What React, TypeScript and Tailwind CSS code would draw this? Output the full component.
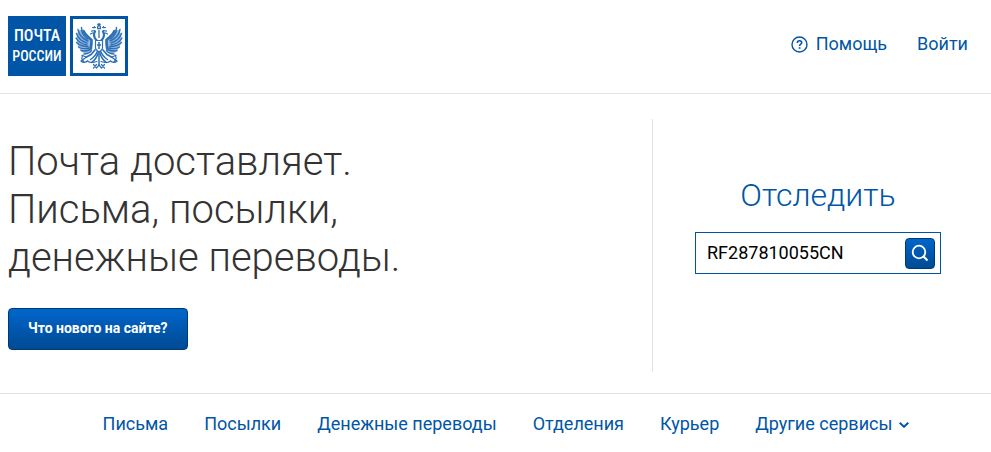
import React, { useState } from 'react';

const LINKS = ['Письма', 'Посылки', 'Денежные переводы', 'Отделения', 'Курьер'];

const EagleHalf: React.FC = () => (
  <g fill="none" stroke="currentColor" strokeLinecap="round">
    {/* wing mass under the feathers */}
    <path
      stroke="none"
      fill="currentColor"
      fillOpacity="0.5"
      d="M9 10C10 15 15 16 19.500 20.500V30L13 35L9 33L6 29L4 24L3.500 18L5 12Z"
    />
    {/* wing feathers */}
    <g strokeWidth="1.400">
      <path d="M8.500 8.500C8.500 14 11 18 15 20" />
      <path d="M5 10.500C6 16 10 20 15 22" />
      <path d="M3.500 14.500C5 19 9 22.500 14 24" />
      <path d="M3 19C5 22.500 9 25 14 26" />
      <path d="M3.500 23.500C6.500 26.500 10 27.500 15 27.500" />
      <path d="M5.500 28C8.500 30 12 30 16 29" />
      <path d="M8 31.500C11.500 32.500 14 32 17 30.500" />
      <path d="M11 35C14.500 35 16.500 34 18.500 31.500" />
    </g>
    <path strokeWidth="2.600" d="M10.500 12C12 16.500 16 18 18.500 21C18.500 25 18 28 17.500 30" />
    {/* neck, head and beak */}
    <path strokeWidth="2.200" d="M23.500 21C20.500 18.500 20.500 14.500 22 12.500" />
    <path strokeWidth="1.200" d="M21.500 11.500L18.500 12.200M19.500 14L17.500 15M21 9L21.500 7.500M19.500 8.500H22.500" />
    {/* leg and claw */}
    <path strokeWidth="1.700" d="M22 31L18 35.500L13.500 38" />
    <path strokeWidth="1.300" d="M13.500 38L9 36.500M13.500 38L8 42M8 42C10 44 13 43.500 14.500 42" />
    <path strokeWidth="1.200" d="M10 36C8 38.500 8.500 40.500 11 43" />
    {/* tail feathers */}
    <path strokeWidth="1.500" d="M24.500 32C23 36 20.500 38.500 17.500 40.500" />
    <path strokeWidth="1.500" d="M25 34C24 38.500 22 41 18.500 43.500" />
    <path strokeWidth="1.200" d="M14.500 42C18 45 21 43 24 42.500M20.500 45.500L23.500 49M20.500 49L23.500 45.500M23.500 49L26 46" />
  </g>
);

const Logo: React.FC = () => (
  <a href="#" aria-label="Почта России" className="flex gap-1">
    <span className="flex h-15 w-[58px] flex-col items-center justify-center bg-[#0055a6] font-['Roboto_Condensed',Roboto,sans-serif] leading-5 font-medium text-white">
      <span className="text-base leading-5">ПОЧТА</span>
      <span className="text-sm leading-5">РОССИИ</span>
    </span>
    <span className="h-15 w-[58px] border-3 border-[#0055a6] text-[#2d70b6]">
      <svg viewBox="0 0 52 54" className="block h-full w-full" aria-hidden="true">
        <EagleHalf />
        <g transform="translate(52 0) scale(-1 1)">
          <EagleHalf />
        </g>
        <g fill="none" stroke="currentColor">
          <path strokeWidth="1.300" d="M24 9.500H28M26 4V8M24.200 5.500H27.800M26 11V19" />
          <circle cx="26" cy="8" r="1.600" strokeWidth="1" />
          <path strokeWidth="1.200" fill="#fff" d="M22.500 21.500H29.500V29C29.500 31 27.500 31.500 26 33C24.500 31.500 22.500 31 22.500 29Z" />
          <path strokeWidth="1.500" d="M26 23V30M24 26H28" />
          <path strokeWidth="1.500" d="M26 33V46" />
        </g>
      </svg>
    </span>
  </a>
);

const App: React.FC = () => {
  const [codigo, setCodigo] = useState('RF287810055CN');

  return (
    <div className="bg-white font-[Roboto,sans-serif] text-lg leading-6 text-[#0055a6]">
      <header className="flex items-start justify-between border-b border-[#e3e3e3] px-2 pt-4 pb-[17px]">
        <Logo />
        <div className="flex gap-[30px] pt-4 pr-[15px]">
          <a href="#" className="flex items-center gap-2">
            <svg viewBox="0 0 17 17" className="h-[17px] w-[17px]" fill="none" stroke="currentColor" aria-hidden="true">
              <circle cx="8.500" cy="8.500" r="7.500" strokeWidth="1.400" />
              <path strokeWidth="1.600" d="M6.300 6.900C6.300 5.500 7.200 4.700 8.500 4.700S10.700 5.500 10.700 6.700C10.700 8.200 8.600 8.300 8.600 10" />
              <path strokeWidth="1.700" d="M8.600 11.200V12.800" />
            </svg>
            Помощь
          </a>
          <a href="#">Войти</a>
        </div>
      </header>

      <main className="flex border-b border-[#e3e3e3] pt-[25px] pb-[21px]">
        <section className="flex-1 px-2 pt-[19px]">
          <h1 className="text-[40px] leading-12 font-light text-[#333]">
            Почта доставляет.
            <br />
            Письма, посылки,
            <br />
            денежные переводы.
          </h1>
          <button
            type="button"
            className="mt-[26px] flex h-[42px] items-center rounded border border-[#003a75] bg-linear-to-b from-[#0066cc] to-[#004a94] px-[19px] pb-0.5 text-sm font-bold text-white"
          >
            Что нового на сайте?
          </button>
        </section>

        <section className="flex w-[339px] flex-col border-l border-[#e3e3e3] pt-14 pr-[50px] pb-[98px] pl-[42px]">
          <label htmlFor="track" className="text-center text-[32px] leading-10 font-light">
            Отследить
          </label>
          <form
            onSubmit={(e) => e.preventDefault()}
            className="mt-[17px] flex h-[42px] items-center border border-[#0055a6] pr-[5px] pl-[11px]"
          >
            <input
              id="track"
              type="text"
              value={codigo}
              onChange={(e) => setCodigo(e.target.value)}
              className="min-w-0 flex-1 text-black focus:outline-none"
            />
            <button
              type="submit"
              aria-label="Найти"
              className="flex h-[31px] w-[30px] items-center justify-center rounded border border-[#003a75] bg-linear-to-b from-[#0066cc] to-[#004a94] text-white"
            >
              <svg viewBox="0 0 18 18" className="h-[18px] w-[18px]" fill="none" stroke="currentColor" aria-hidden="true">
                <circle cx="8" cy="8" r="6.300" strokeWidth="1.800" />
                <path d="M12.500 12.500L16.500 16.500" strokeWidth="2.200" />
              </svg>
            </button>
          </form>
        </section>
      </main>

      <nav className="flex justify-center gap-9 pt-[18px] pb-4 pl-[21px]">
        {LINKS.map((link) => (
          <a key={link} href="#" className="whitespace-nowrap">
            {link}
          </a>
        ))}
        <button type="button" className="flex items-center gap-[7px] whitespace-nowrap">
          Другие сервисы
          <svg viewBox="0 0 10 6" className="mt-0.5 h-[6px] w-[10px]" fill="none" stroke="currentColor" aria-hidden="true">
            <path d="M0.700 0.800L5 4.800L9.300 0.800" strokeWidth="1.900" />
          </svg>
        </button>
      </nav>
    </div>
  );
};

export default App;
